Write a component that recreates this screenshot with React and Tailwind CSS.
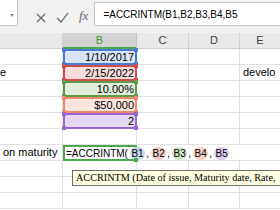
import React from 'react';

const font = { fontFamily: '"Liberation Sans", Arial, sans-serif' };

// corner handles of a range box
const Handles = ({ color }) => (
  <>
    <span className={`absolute -left-[3px] -top-[3px] w-[4px] h-[4px] ${color}`} />
    <span className={`absolute -right-[3px] -top-[3px] w-[4px] h-[4px] ${color}`} />
    <span className={`absolute -left-[3px] -bottom-[3px] w-[4px] h-[4px] ${color}`} />
    <span className={`absolute -right-[3px] -bottom-[3px] w-[4px] h-[4px] ${color}`} />
  </>
);

const ranges = [
  { v: '1/10/2017', box: 'border-[#4a7bd0] bg-[#dae3f5]', h: 'bg-[#4a7bd0]' },
  { v: '2/15/2022', box: 'border-[#cf4d4d] bg-[#f6dcdc]', h: 'bg-[#cf4d4d]' },
  { v: '10.00%', box: 'border-[#5e9a48] bg-[#e2eedb]', h: 'bg-[#5e9a48]' },
  { v: '$50,000', box: 'border-[#ec8c6c] bg-[#fce5de]', h: 'bg-[#ec8c6c]' },
  { v: '2', box: 'border-[#9a66d0] bg-[#e3d7f1]', h: 'bg-[#9a66d0]' },
];

const pills = [
  { t: 'B1', c: 'bg-[#c9d7f2]' },
  { t: 'B2', c: 'bg-[#f3caca]' },
  { t: 'B3', c: 'bg-[#d0e4c6]' },
  { t: 'B4', c: 'bg-[#f9d3c5]' },
  { t: 'B5', c: 'bg-[#dccef1]' },
];

const Cell = ({ w, className = '', children }) => (
  <div className={`${w} h-full shrink-0 border-b border-r border-[#e1e1e1] ${className}`}>{children}</div>
);

export default function App() {
  const rows = [];
  for (let i = 0; i < 10; i++) {
    const r = ranges[i];
    let a = null;
    if (i === 1) a = <div className="h-full flex items-center">e</div>;
    if (i === 6) a = <div className="h-full flex items-center pl-[3px] whitespace-nowrap">on maturity</div>;

    let b;
    if (r) {
      b = (
        <div className={`w-[74px] h-full shrink-0 border-2 relative flex items-center justify-end pr-[1px] ${r.box}`}>
          {r.v}
          <Handles color={r.h} />
        </div>
      );
    } else if (i === 6) {
      b = (
        <div className="w-[74px] h-full shrink-0 border-2 border-[#4ea64e] relative flex items-center pl-[1px] whitespace-nowrap text-[10px] z-10">
          <span>=ACCRINTM(</span>
          {pills.map((p, k) => (
            <React.Fragment key={p.t}>
              <span className={`ml-[2px] px-[1.5px] h-[13px] leading-[13px] rounded-full ${p.c}`}>{p.t}</span>
              {k < 4 && <span className="ml-[1px]">,</span>}
            </React.Fragment>
          ))}
          <span className="ml-[1px] w-[1px] h-[13px] bg-black" />
          <span className="absolute -right-[3px] -bottom-[3px] w-[4px] h-[4px] bg-[#4ea64e]" />
        </div>
      );
    } else {
      b = <Cell w="w-[74px]" />;
    }

    rows.push(
      <div key={i} className="flex h-[16px] text-[11px] text-black">
        <Cell w="w-[63px]">{a}</Cell>
        {b}
        <Cell w="w-[52px]" className={i === 6 ? 'border-r-0' : ''} />
        <Cell w="w-[51px]" className={i === 6 ? 'border-r-0' : ''} />
        <Cell w="flex-1" className="border-r-0 flex items-center pl-[3px] whitespace-nowrap overflow-hidden">
          {i === 1 ? 'develo' : null}
        </Cell>
      </div>
    );
  }

  return (
    <div className="w-[280px] h-[210px] overflow-hidden bg-white relative" style={font}>
      {/* formula bar */}
      <div className="h-[33px] bg-[#f1f1f1] flex items-start">
        <div className="w-[18px] h-[26px] bg-white border-b border-r border-[#c6c6c6] rounded-br-[2px] relative shrink-0">
          <svg className="absolute right-[3px] top-[14px]" width="4" height="3" viewBox="0 0 4 3">
            <path d="M0 0h4L2 3z" fill="#888" />
          </svg>
        </div>
        <svg className="ml-[18px] mt-[13px] shrink-0" width="10" height="10" viewBox="0 0 10 10">
          <path d="M1 1l8 8M9 1l-8 8" stroke="#666" strokeWidth="1.2" fill="none" />
        </svg>
        <svg className="ml-[10px] mt-[12px] shrink-0" width="13" height="11" viewBox="0 0 13 11">
          <path d="M1 6l4 4 7-9" stroke="#666" strokeWidth="1.2" fill="none" />
        </svg>
        <span
          className="ml-[10px] mt-[9px] text-[13px] italic text-[#666] leading-none shrink-0"
          style={{ fontFamily: '"Liberation Serif", "Times New Roman", serif' }}
        >
          fx
        </span>
        <div className="ml-[6px] mt-[2px] flex-1 h-[24px] bg-white border-y border-l border-[#c6c6c6] rounded-l-[2px] flex items-center pl-[8px] text-[10px] text-black whitespace-nowrap">
          =ACCRINTM(B1,B2,B3,B4,B5
        </div>
      </div>

      {/* column headers */}
      <div className="flex h-[16px] bg-[#e8e8e8] text-[11px] text-[#444]">
        <div className="w-[63px] shrink-0 border-r border-b border-[#d0d0d0]" />
        <div className="w-[74px] shrink-0 bg-[#d3d3d3] border-r border-[#c4c4c4] border-b-2 border-b-[#4ea64e] flex items-center justify-center text-[#3d9a3d]">
          B
        </div>
        <div className="w-[52px] shrink-0 border-r border-b border-[#d0d0d0] flex items-center justify-center">C</div>
        <div className="w-[51px] shrink-0 border-r border-b border-[#d0d0d0] flex items-center justify-center">D</div>
        <div className="flex-1 border-b border-[#d0d0d0] flex items-center justify-center">E</div>
      </div>

      {rows}

      {/* function tooltip */}
      <div
        className="absolute left-[72px] top-[170px] w-[220px] h-[16px] pl-[3px] bg-[#ffffe1] border border-[#6e6e6e] text-[10.2px] leading-[14px] text-black whitespace-nowrap z-20"
        style={{ fontFamily: '"Liberation Serif", "Times New Roman", serif' }}
      >
        ACCRINTM (Date of issue, Maturity date, Rate,
      </div>
    </div>
  );
}
